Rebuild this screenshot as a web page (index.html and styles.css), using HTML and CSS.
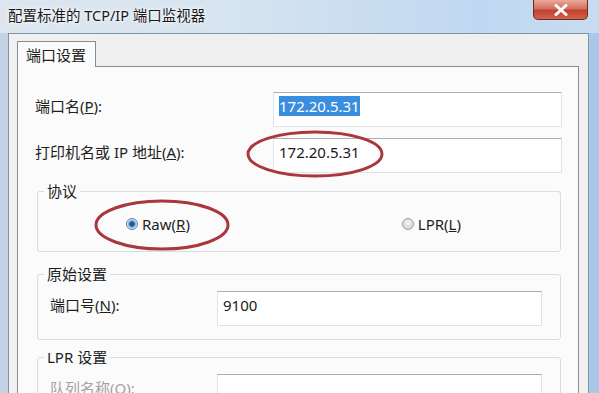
FILE: index.html
```html
<!DOCTYPE html>
<html lang="zh-CN">
<head>
  <meta charset="UTF-8">
  <title>配置标准的 TCP/IP 端口监视器</title>
  <link rel="stylesheet" href="styles.css">
</head>
<body>

  <div class="window">
    <div class="titlebar">
      <span class="title">配置标准的 TCP/IP 端口监视器</span>
      <div class="close">
        <svg width="16" height="12" viewBox="0 0 16 12">
          <path d="M3 1.5 L13 10.5 M13 1.5 L3 10.5" stroke="#fff" stroke-width="3" stroke-linecap="round"/>
        </svg>
      </div>
    </div>

    <div class="frame">
      <div class="client">
        <div class="tabs">
          <div class="tab">端口设置</div>
        </div>

        <div class="panel">
          <div class="row">
            <label class="label">端口名(<u>P</u>):</label>
            <div class="textbox wide"><span class="selected">172.20.5.31</span></div>
          </div>
          <div class="row">
            <label class="label">打印机名或 IP 地址(<u>A</u>):</label>
            <div class="textbox wide">172.20.5.31</div>
          </div>

          <fieldset class="group protocol">
            <legend>协议</legend>
            <div class="radios">
              <span class="radio"><span class="dot checked"></span>Raw(<u>R</u>)</span>
              <span class="radio"><span class="dot"></span>LPR(<u>L</u>)</span>
            </div>
          </fieldset>

          <fieldset class="group raw">
            <legend>原始设置</legend>
            <div class="row">
              <label class="label">端口号(<u>N</u>):</label>
              <div class="textbox short">9100</div>
            </div>
          </fieldset>

          <fieldset class="group lpr">
            <legend>LPR 设置</legend>
            <div class="row">
              <label class="label disabled">队列名称(<u>Q</u>):</label>
              <div class="textbox short"></div>
            </div>
          </fieldset>
        </div>
      </div>
    </div>

    <!-- hand-drawn red circles over the screenshot -->
    <svg class="marks" width="599" height="393">
      <ellipse cx="315" cy="154" rx="67" ry="22" fill="none" stroke="#a9373d" stroke-width="3"/>
      <ellipse cx="162" cy="225" rx="66" ry="24" fill="none" stroke="#a9373d" stroke-width="3"/>
    </svg>
  </div>

</body>
</html>
```

FILE: styles.css
```css
body {
  margin: 0;
  padding: 0;
  font-family: "Noto Sans", "Noto Sans CJK SC", sans-serif;
  color: #1e1e1e;
}

.window {
  position: relative;
  width: 599px;
  height: 393px;
  overflow: hidden;
  background: linear-gradient(to right, #c3d3e3, #cfdff0 50%, #a9c8e8);
}

.titlebar {
  display: flex;
  align-items: flex-start;
  height: 33px;
  padding-left: 8px;
  background: linear-gradient(to right, #dde6ef, #d6e3f0 40%, #bfd8f1 80%, #c8dcf0);
}

.title {
  font-size: 14.5px;
  line-height: 30px;
  color: #1a1a1a;
  text-shadow: 0 0 6px #fff, 0 0 3px #fff;
}

.close {
  display: flex;
  align-items: center;
  justify-content: center;
  width: 55px;
  height: 20px;
  margin-left: auto;
  margin-right: 11px;
  border: 1px solid #6f2a22;
  border-top: none;
  border-radius: 0 0 5px 5px;
  background: linear-gradient(to bottom, #e9a99a, #d4705f 45%, #c2412f 55%, #d0644c);
  box-sizing: border-box;
}

.frame {
  padding: 0 10px 0 8px;
}

.client {
  height: 360px;
  padding: 7px 9px 0 8px;
  border: 1px solid #7f93a9;
  border-bottom: none;
  background: #f0f0f0;
}

.tabs {
  display: flex;
}

.tab {
  position: relative;
  z-index: 1;
  height: 25px;
  margin-bottom: -1px;
  padding: 0 9px 0 8px;
  border: 1px solid #898c95;
  border-bottom: none;
  background: #fbfbfb;
  font-size: 15px;
  line-height: 27px;
}

.panel {
  height: 340px;
  padding: 25px 16px 0 17px;
  border: 1px solid #898c95;
  background: #fbfbfb;
}

.row {
  display: flex;
  align-items: flex-start;
  justify-content: space-between;
}

.row + .row {
  margin-top: 11px;
}

.label {
  margin-top: 4px;
  font-size: 15px;
  line-height: 20px;
}

.label.disabled {
  color: #a3a3a3;
}

.textbox {
  height: 35px;
  padding: 3px 5px 0;
  box-sizing: border-box;
  border: 1px solid #dfe4ea;
  border-top-color: #abadb3;
  background: #fff;
  font-size: 15px;
  line-height: 20px;
  color: #1a1a1a;
}

.textbox.wide {
  width: 289px;
}

.textbox.short {
  width: 325px;
}

.selected {
  background: #3a8ee0;
  color: #fff;
}

.group {
  margin: 0 1px 0 2px;
  border: 1px solid #d7dde3;
  border-radius: 3px;
  padding: 0;
}

.group legend {
  margin-left: 6px;
  padding: 0 3px;
  font-size: 15px;
  line-height: 20px;
}

.protocol {
  margin-top: 8px;
}

.radios {
  display: flex;
  justify-content: space-between;
  padding: 13px 99px 17px 88px;
  font-size: 15px;
  line-height: 20px;
}

.radio {
  display: flex;
  align-items: center;
}

.dot {
  display: inline-block;
  width: 12px;
  height: 12px;
  margin-right: 4px;
  border: 1px solid #9a9ea3;
  border-radius: 50%;
  box-sizing: border-box;
  background: radial-gradient(circle at 50% 40%, #f4f4f4, #c9cbcd);
}

.dot.checked {
  border-color: #5b7fa3;
  background: radial-gradient(circle, #14467d 0, #2f73b5 2.5px, #b6d3ee 4px, #e8eef4 5px);
}

.raw {
  margin-top: 12px;
}

.lpr {
  margin-top: 7px;
  height: 60px;
}

.group .row {
  margin: 0;
  padding: 7px 18px 13px 12px;
}

.marks {
  position: absolute;
  top: 0;
  left: 0;
  pointer-events: none;
}
```
